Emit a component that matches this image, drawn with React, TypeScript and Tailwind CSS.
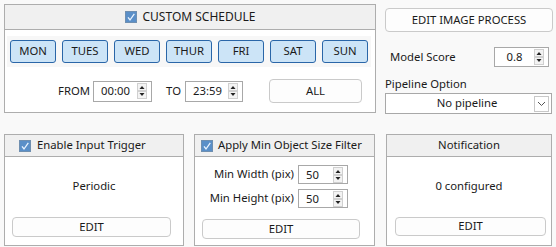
import React from "react";

const Check = () => (
  <svg width="12" height="12" viewBox="0 0 12 12" className="shrink-0">
    <rect x="0.5" y="0.5" width="11" height="11" fill="#5a8fc8" stroke="#6f8fb0" />
    <path d="M3 6.3 L5 9 L9.3 2.8" fill="none" stroke="#eaf4ff" strokeWidth="1.3" />
  </svg>
);

const Arrows = () => (
  <svg width="10" height="16" viewBox="0 0 10 16" className="shrink-0">
    <rect x="0.5" y="0.5" width="9" height="7" fill="#f3f3f3" stroke="#d0d0d0" />
    <rect x="0.5" y="8.5" width="9" height="7" fill="#f3f3f3" stroke="#d0d0d0" />
    <path d="M2.5 6 L5 3 L7.5 6 Z" fill="#222" />
    <path d="M2.5 10 L5 13 L7.5 10 Z" fill="#222" />
  </svg>
);

function Spin({ value, w, h, align = "left" }: { value: string; w: string; h: string; align?: string }) {
  return (
    <div className={`${w} ${h} border border-[#a8a8a8] bg-white flex items-center pr-[4px]`}>
      <div className={`flex-1 ${align === "center" ? "text-center" : "pl-[7px]"} leading-none`}>{value}</div>
      <Arrows />
    </div>
  );
}

const Btn = ({ children, cls }: { children: React.ReactNode; cls: string }) => (
  <div className={`${cls} border border-[#cacaca] rounded-[4px] bg-[#fdfdfd] flex items-center justify-center`}>
    {children}
  </div>
);

const days = ["MON", "TUES", "WED", "THUR", "FRI", "SAT", "SUN"];

export default function App() {
  return (
    <div
      className="w-[556px] h-[247px] bg-[#f9f9f9] text-[11.3px] text-[#1a1a1a] overflow-hidden"
      style={{ fontFamily: '"Noto Sans", "Open Sans", sans-serif' }}
    >
      {/* Top row */}
      <div className="flex pt-[4px] pl-[4px]">
        <div className="w-[372px] h-[109px] border border-[#adadad] bg-white flex flex-col">
          <div className="h-[25px] bg-[#f0f0f0] border-b border-[#adadad] flex items-center justify-center gap-[6px] text-[12px]">
            <Check />
            <span>CUSTOM SCHEDULE</span>
          </div>
          <div className="ml-[2px] mt-[6px] w-[364px] bg-[#f7f7f7] px-[3px] pt-[4px] pb-[4px] flex gap-[6px]">
            {days.map((d) => (
              <div
                key={d}
                className="w-[46px] h-[23px] rounded-[3px] border border-[#2a66a8] bg-[#cce4f7] flex items-center justify-center"
              >
                {d}
              </div>
            ))}
          </div>
          <div className="flex items-center mt-[12px]">
            <div className="w-[85px] text-right">FROM</div>
            <div className="ml-[3px]">
              <Spin value="00:00" w="w-[59px]" h="h-[21px]" />
            </div>
            <div className="w-[29px] text-right">TO</div>
            <div className="ml-[4px]">
              <Spin value="23:59" w="w-[58px]" h="h-[21px]" />
            </div>
            <Btn cls="ml-[26px] w-[93px] h-[24px]">ALL</Btn>
          </div>
        </div>
        <div className="ml-[9px] w-[168px] pt-[4px] flex flex-col">
          <Btn cls="w-[168px] h-[24px]">EDIT IMAGE PROCESS</Btn>
          <div className="mt-[15px] flex items-center justify-between pr-[4px]">
            <span className="pl-[5px]">Model Score</span>
            <Spin value="0.8" w="w-[55px]" h="h-[20px]" align="center" />
          </div>
          <div className="mt-[9px] h-[16px] leading-[16px]">Pipeline Option</div>
          <div className="mt-[1px] w-[167px] h-[21px] border border-[#a8a8a8] bg-white flex items-center pr-[2px]">
            <div className="flex-1 text-center pl-[14px]">No pipeline</div>
            <div className="w-[15px] h-[16px] border border-[#c8c8c8] flex items-center justify-center">
              <svg width="9" height="6" viewBox="0 0 9 6">
                <path d="M1 1 L4.5 4.5 L8 1" fill="none" stroke="#555" strokeWidth="1" />
              </svg>
            </div>
          </div>
        </div>
      </div>

      {/* Bottom row */}
      <div className="flex mt-[20px] pl-[4px]">
        <div className="w-[180px] h-[112px] border border-[#adadad] bg-white flex flex-col">
          <div className="h-[22px] bg-[#f0f0f0] border-b border-[#adadad] flex items-center pl-[14px] gap-[6px]">
            <Check />
            <span>Enable Input Trigger</span>
          </div>
          <div className="mt-[21px] h-[16px] leading-[16px] text-center">Periodic</div>
          <Btn cls="mt-[23px] ml-[7px] w-[159px] h-[20px]">EDIT</Btn>
        </div>
        <div className="ml-[10px] w-[181px] h-[112px] border border-[#adadad] bg-white flex flex-col">
          <div className="h-[22px] bg-[#f0f0f0] border-b border-[#adadad] flex items-center pl-[6px] gap-[5px]">
            <Check />
            <span>Apply Min Object Size Filter</span>
          </div>
          <div className="mt-[8px] flex items-center">
            <div className="w-[103px] text-right pr-[4px]">Min Width (pix)</div>
            <Spin value="50" w="w-[50px]" h="h-[19px]" />
          </div>
          <div className="mt-[5px] flex items-center">
            <div className="w-[103px] text-right pr-[4px]">Min Height (pix)</div>
            <Spin value="50" w="w-[50px]" h="h-[19px]" />
          </div>
          <Btn cls="mt-[11px] ml-[7px] w-[158px] h-[20px]">EDIT</Btn>
        </div>
        <div className="ml-[11px] w-[166px] h-[112px] border border-[#adadad] bg-white flex flex-col">
          <div className="h-[22px] bg-[#f0f0f0] border-b border-[#adadad] flex items-center justify-center">
            <span>Notification</span>
          </div>
          <div className="mt-[21px] h-[16px] leading-[16px] text-center">0 configured</div>
          <Btn cls="mt-[23px] ml-[8px] w-[151px] h-[19px]">EDIT</Btn>
        </div>
      </div>
    </div>
  );
}
